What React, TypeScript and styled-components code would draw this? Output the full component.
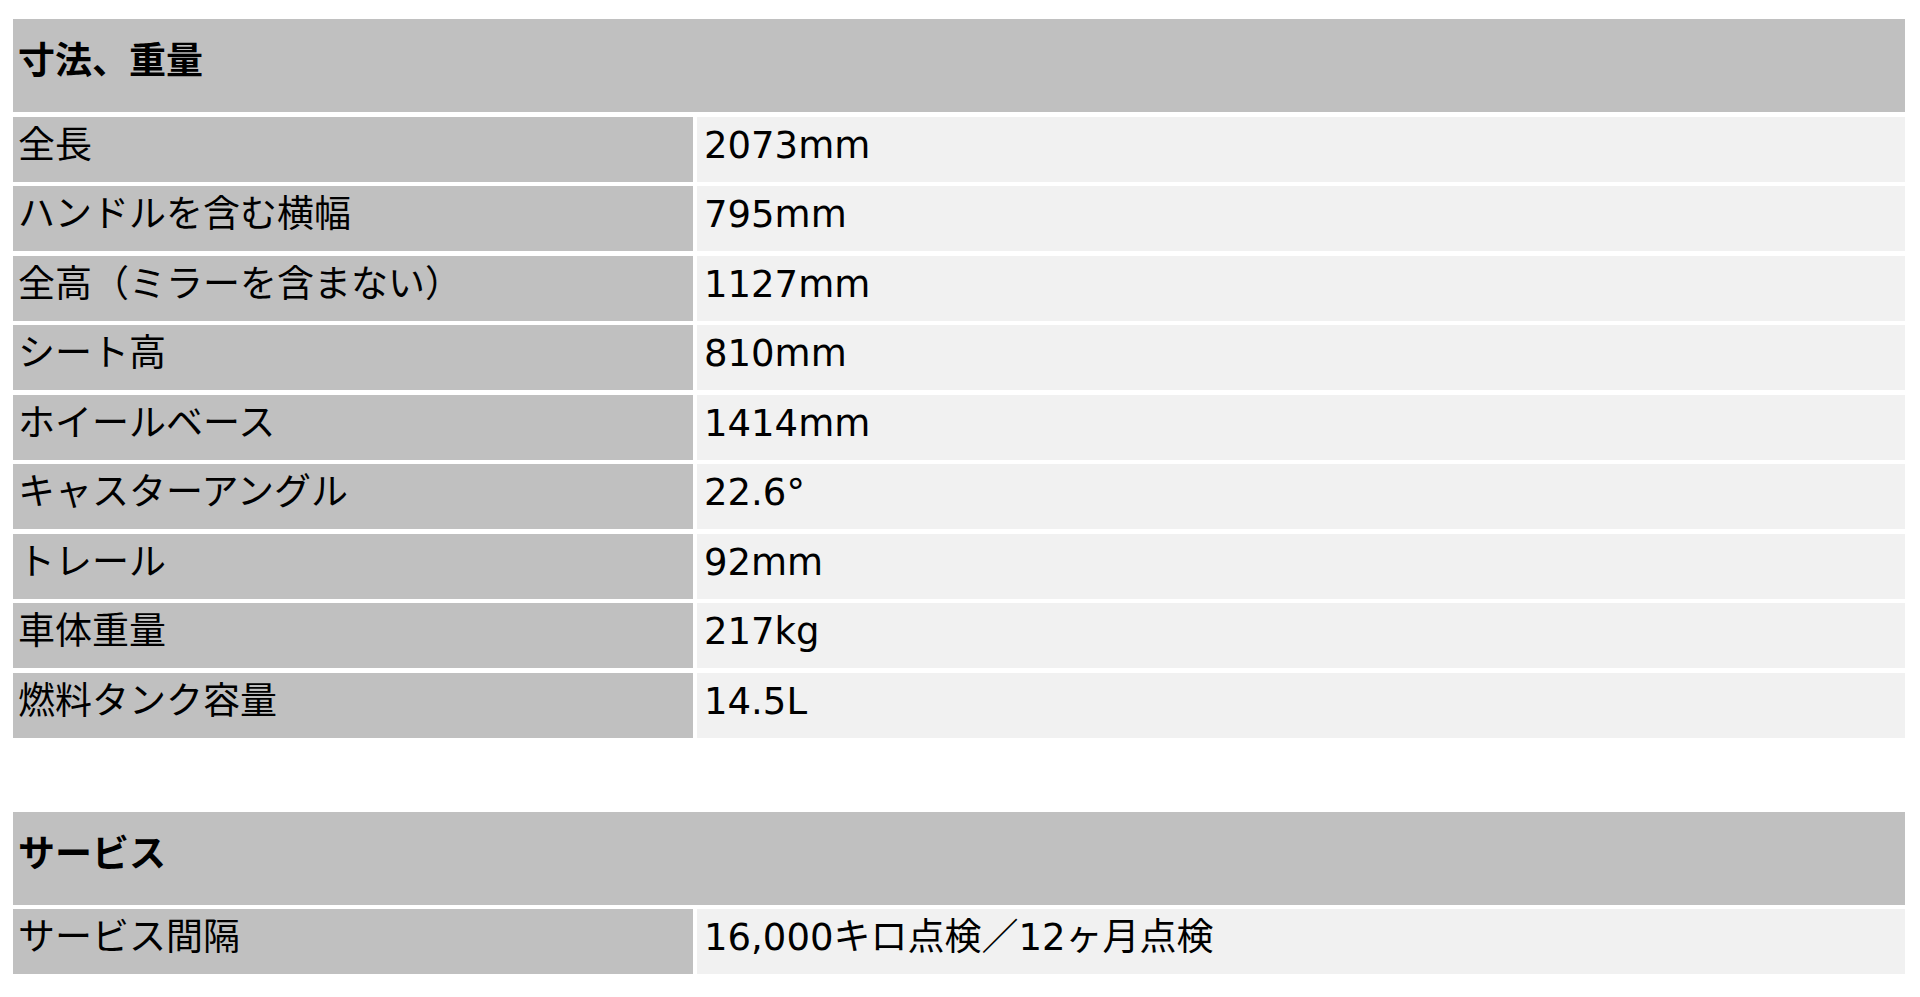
import React from "react";
import styled, { createGlobalStyle } from "styled-components";

const Global = createGlobalStyle`
  html, body { margin: 0; padding: 0; background: #ffffff; }
  body {
    font-family: "DejaVu Sans", "Noto Sans CJK JP", sans-serif;
    color: #000;
  }
`;

const Page = styled.div`
  display: flex;
  flex-direction: column;
  gap: 74px;
  padding: 19px 15px 0 13px;
`;

const SpecTable = styled.section`
  display: grid;
  grid-template-columns: 680px 1fr;
  column-gap: 4px;
  row-gap: 4.5px;
`;

const Heading = styled.h2`
  grid-column: 1 / -1;
  margin: 0;
  height: 93px;
  box-sizing: border-box;
  padding: 24px 5px 0;
  background: #c0c0c0;
  font-size: 37px;
  line-height: 37px;
  font-weight: 700;
  font-family: "DejaVu Sans", "Noto Sans CJK JP", sans-serif;
`;

const Cell = styled.div<{ $label?: boolean }>`
  height: 65px;
  box-sizing: border-box;
  padding: 10px 5px 0 ${(p) => (p.$label ? "5px" : "7px")};
  background: ${(p) => (p.$label ? "#c0c0c0" : "#f1f1f1")};
  font-size: 37px;
  line-height: 37px;
  white-space: nowrap;
`;

type Row = [string, string];

const dims: Row[] = [
  ["全長", "2073mm"],
  ["ハンドルを含む横幅", "795mm"],
  ["全高（ミラーを含まない）", "1127mm"],
  ["シート高", "810mm"],
  ["ホイールベース", "1414mm"],
  ["キャスターアングル", "22.6°"],
  ["トレール", "92mm"],
  ["車体重量", "217kg"],
  ["燃料タンク容量", "14.5L"],
];

const service: Row[] = [["サービス間隔", "16,000キロ点検／12ヶ月点検"]];

function Table({ title, rows }: { title: string; rows: Row[] }) {
  return (
    <SpecTable>
      <Heading>{title}</Heading>
      {rows.map(([k, v]) => (
        <React.Fragment key={k}>
          <Cell $label>{k}</Cell>
          <Cell>{v}</Cell>
        </React.Fragment>
      ))}
    </SpecTable>
  );
}

export default function App() {
  return (
    <>
      <Global />
      <Page>
        <Table title="寸法、重量" rows={dims} />
        <Table title="サービス" rows={service} />
      </Page>
    </>
  );
}
